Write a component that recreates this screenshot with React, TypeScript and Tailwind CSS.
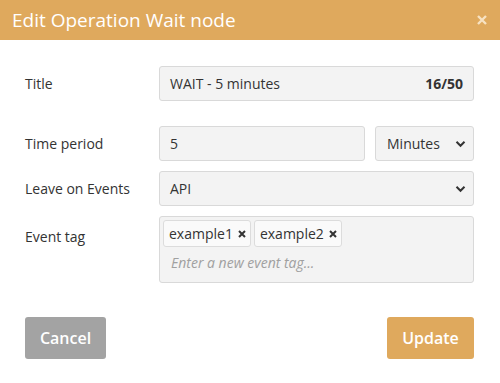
import React from "react";

function Chevron() {
  return (
    <svg width="11" height="8" viewBox="0 0 11 8" className="shrink-0">
      <path d="M1.5 1.8 L5.5 5.8 L9.5 1.8" fill="none" stroke="#333" strokeWidth="2" />
    </svg>
  );
}

function Chip({ label }: { label: string }) {
  return (
    <div className="flex h-[27px] items-center rounded-[3px] border border-[#dcdcdc] bg-[#fafafa] pl-[5px] pr-[4px] text-[14px] text-[#333]">
      <span>{label}</span>
      <svg width="8" height="8" viewBox="0 0 8 8" className="ml-[5px] shrink-0">
        <path d="M1 1 L7 7 M7 1 L1 7" stroke="#333" strokeWidth="2" />
      </svg>
    </div>
  );
}

export default function App() {
  return (
    <div
      className="h-[383px] w-[500px] overflow-hidden bg-white"
      style={{ fontFamily: '"Open Sans", "Liberation Sans", sans-serif' }}
    >
      <div className="flex h-[40px] items-center justify-between bg-[#dfa95d] pl-[12px] pr-[12px]">
        <span className="text-[19px] text-white">Edit Operation Wait node</span>
        <svg width="10" height="10" viewBox="0 0 10 10" className="mr-[1px]">
          <path d="M1 1 L9 9 M9 1 L1 9" stroke="#f7e2c2" strokeWidth="2.4" />
        </svg>
      </div>
      <div className="flex flex-col pl-[25px] pr-[26px] pt-[26px]">
        <div className="flex items-center">
          <div className="w-[134px] text-[14px] text-[#333]">Title</div>
          <div className="flex h-[35px] flex-1 items-center justify-between rounded-[3px] border border-[#d9d9d9] bg-[#f3f3f3] px-[10px] text-[14px] text-[#333]">
            <span>WAIT - 5 minutes</span>
            <span className="font-bold">16/50</span>
          </div>
        </div>
        <div className="mt-[25px] flex items-center">
          <div className="w-[134px] text-[14px] text-[#333]">Time period</div>
          <div className="flex h-[35px] w-[206px] items-center rounded-[3px] border border-[#d9d9d9] bg-[#f3f3f3] px-[10px] text-[14px] text-[#333]">
            5
          </div>
          <div className="ml-[10px] flex h-[35px] flex-1 items-center justify-between rounded-[3px] border border-[#d9d9d9] bg-[#f3f3f3] pl-[11px] pr-[7px] text-[14px] text-[#333]">
            <span>Minutes</span>
            <Chevron />
          </div>
        </div>
        <div className="mt-[10px] flex items-center">
          <div className="w-[134px] text-[14px] text-[#333]">Leave on Events</div>
          <div className="flex h-[35px] flex-1 items-center justify-between rounded-[3px] border border-[#d9d9d9] bg-[#f3f3f3] pl-[10px] pr-[7px] text-[14px] text-[#333]">
            <span>API</span>
            <Chevron />
          </div>
        </div>
        <div className="mt-[10px] flex items-start">
          <div className="w-[134px] pt-[10px] text-[14px] text-[#333]">Event tag</div>
          <div className="flex h-[67px] flex-1 flex-col rounded-[3px] border border-[#d9d9d9] bg-[#f3f3f3] pl-[3px] pt-[3px]">
            <div className="flex gap-[3px]">
              <Chip label="example1" />
              <Chip label="example2" />
            </div>
            <div className="pl-[8px] pt-[5px] text-[14px] italic text-[#a0a0a0]">Enter a new event tag...</div>
          </div>
        </div>
        <div className="mt-[34px] flex items-center justify-between">
          <div className="flex h-[42px] w-[81px] items-center justify-center rounded-[3px] bg-[#a3a3a3] text-[16px] font-semibold text-white">
            Cancel
          </div>
          <div className="flex h-[42px] w-[87px] items-center justify-center rounded-[3px] bg-[#dfa95d] text-[16px] font-semibold text-white">
            Update
          </div>
        </div>
      </div>
    </div>
  );
}
